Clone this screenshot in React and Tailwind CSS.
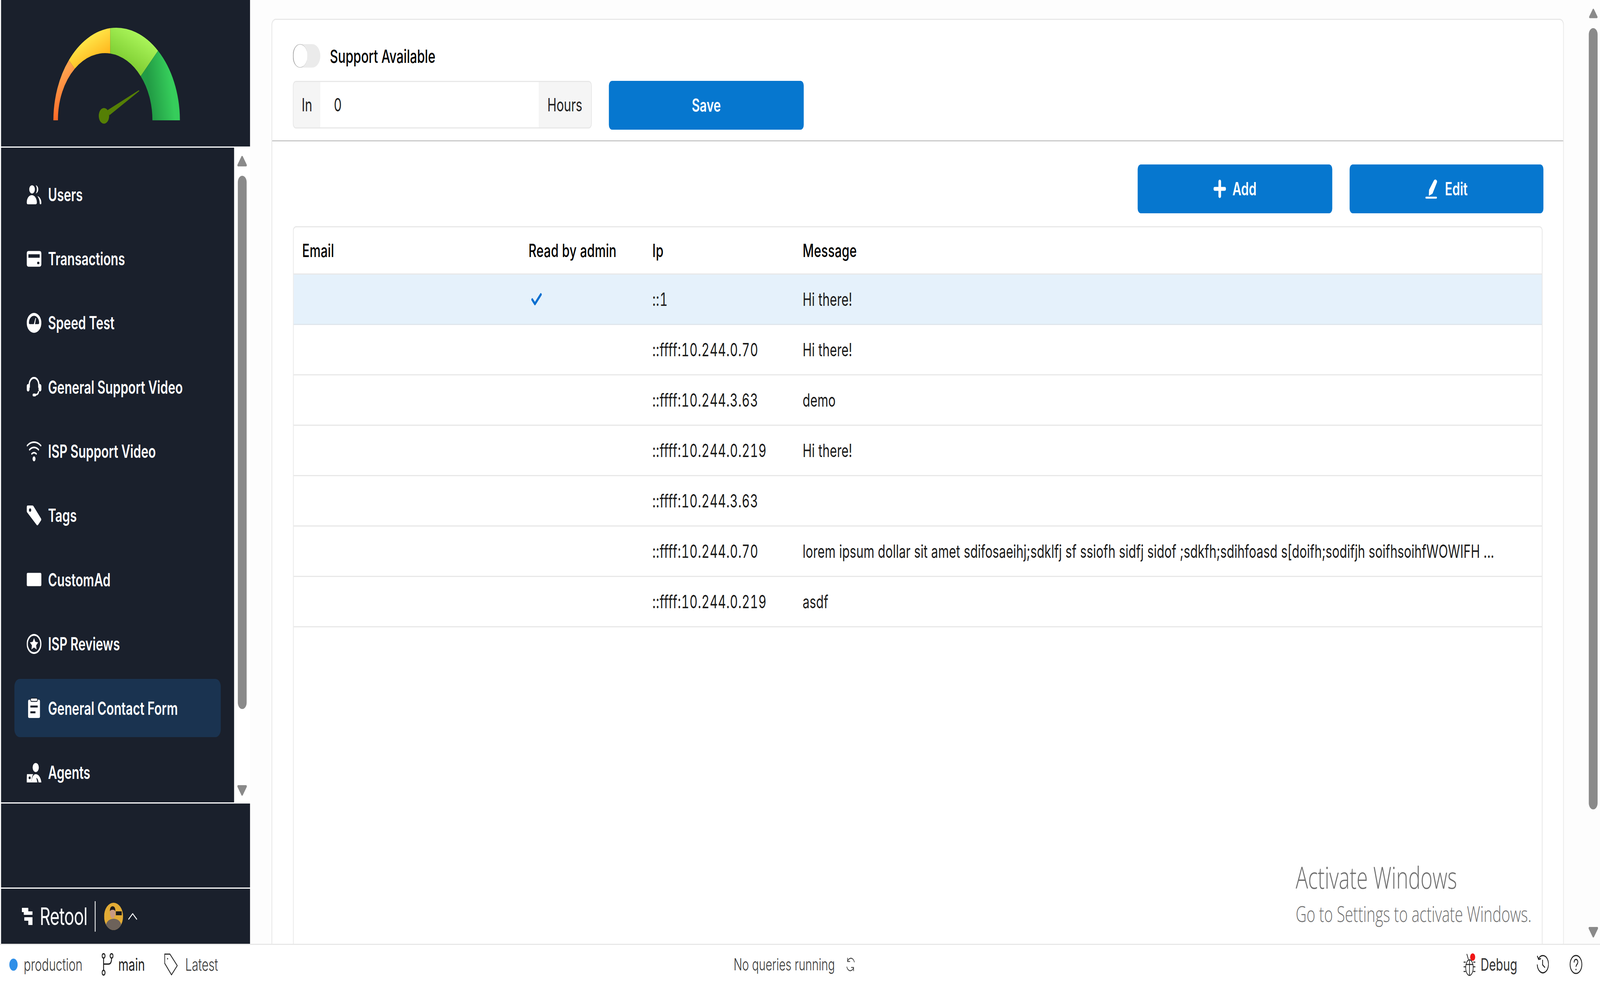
const font = { fontFamily: 'Inter, "Noto Sans", sans-serif' }

// sidebar icons, all on a 26x24 box so they line up
const UsersIcon = () => (
  <svg viewBox="0 0 26 24" className="w-[55px] h-[51px]" fill="white">
    <circle cx="9.500" cy="6" r="5" />
    <path d="M0 22c0-5 4-9 9-9s9 4 9 9c0 1-.8 2-2 2H2c-1.200 0-2-1-2-2z" />
    <path d="M16 1c3 .5 4.500 2.500 4.500 5s-2 4.500-4.500 5c1.500-1.500 2-3 2-5s-.5-3.500-2-5z" />
    <path d="M19 14c4 1 7 4 7 8.500 0 1-.6 1.500-1.400 1.500-1 0-1.600-.5-1.600-1.500 0-3-1.500-6-4-8.500z" />
  </svg>
)
const CardIcon = () => (
  <svg viewBox="0 0 26 24" className="w-[55px] h-[51px]">
    <rect x="0" y="3" width="26" height="19" rx="3" fill="white" />
    <rect x="3" y="7" width="20" height="4.200" fill="#1a202c" />
    <rect x="18.500" y="16" width="4" height="3" rx="1.500" fill="#1a202c" />
  </svg>
)
const SpeedIcon = () => (
  <svg viewBox="0 0 26 24" className="w-[55px] h-[51px]">
    <ellipse cx="13" cy="12" rx="13" ry="12" fill="white" />
    <path d="M4 12a9 8.500 0 0 1 18 0c0 1-.5 1.500-1.500 1.500H5.500C4.500 13.500 4 13 4 12z" fill="#1a202c" />
    <path d="M12.500 14l3-8 1 .5-2 8z" fill="white" />
  </svg>
)
const HeadsetIcon = () => (
  <svg viewBox="0 0 26 24" className="w-[55px] h-[51px]" fill="none" stroke="white">
    <path d="M4.500 13V9.500a8.500 8.500 0 0 1 17 0V13" strokeWidth="2.400" />
    <rect x="0.500" y="9" width="4" height="8" rx="2" fill="white" strokeWidth="1" />
    <rect x="21.500" y="9" width="4" height="8" rx="2" fill="white" strokeWidth="1" />
    <path d="M21 17c0 3-2 4.500-6 4.500" strokeWidth="2" />
    <rect x="10.500" y="20" width="6" height="3.500" rx="1.700" fill="white" strokeWidth="0" />
  </svg>
)
const WifiIcon = () => (
  <svg viewBox="0 0 26 24" className="w-[55px] h-[51px]" fill="none" stroke="white" strokeWidth="2" strokeLinecap="round">
    <path d="M1 5c7-5.500 17-5.500 24 0" />
    <path d="M5 10c5-3.700 11-3.700 16 0" />
    <path d="M9 15c2.500-1.700 5.500-1.700 8 0" />
    <ellipse cx="13" cy="21" rx="2.600" ry="3" fill="white" stroke="none" />
  </svg>
)
const TagIcon = () => (
  <svg viewBox="0 0 26 24" className="w-[55px] h-[55px]">
    <path d="M2 0h8c1 0 1.600.4 2.200 1l13 14.500c.8.900.8 2 0 2.800l-5 5c-.8.800-1.900.8-2.700 0L1 8.500C.4 8 0 7.200 0 6.300V2c0-1.200.8-2 2-2z" fill="white" />
    <circle cx="6" cy="5.500" r="2" fill="#1a202c" />
  </svg>
)
const AdIcon = () => (
  <svg viewBox="0 0 26 24" className="w-[55px] h-[51px]">
    <rect x="0" y="4" width="26" height="16" rx="2" fill="white" />
  </svg>
)
const StarIcon = () => (
  <svg viewBox="0 0 26 24" className="w-[55px] h-[51px]">
    <ellipse cx="13" cy="12" rx="12" ry="11" fill="none" stroke="white" strokeWidth="2.200" />
    <path d="M13 4.800l2.300 4.600 5 .7-3.600 3.500.9 5-4.600-2.400-4.600 2.400.9-5-3.600-3.500 5-.7z" fill="white" />
  </svg>
)
const ClipboardIcon = () => (
  <svg viewBox="0 0 26 24" className="w-[55px] h-[55px]">
    <rect x="2.500" y="2" width="21" height="22" rx="2" fill="white" />
    <rect x="7" y="0" width="12" height="4" rx="1.500" fill="white" stroke="#1a202c" strokeWidth="1" />
    <rect x="6.500" y="9" width="13" height="2.400" fill="#1a202c" />
    <rect x="6.500" y="16" width="9" height="2.400" fill="#1a202c" />
  </svg>
)
const AgentIcon = () => (
  <svg viewBox="0 0 26 24" className="w-[55px] h-[51px]" fill="white">
    <circle cx="16" cy="6" r="5.500" />
    <path d="M8 24c.6-4 3-10 8-10 5 0 9 4 10 10h-5c-.6-3-2-5-4-5.500L19 24z" />
    <path d="M0.500 14h11c-2 2.500-3 6-3.500 10H0c-.2-3 0-7 .5-10z" />
    <rect x="3.500" y="17" width="3.500" height="3" rx="1" fill="#1a202c" />
  </svg>
)

const menu = [
  { label: 'Users', icon: <UsersIcon /> },
  { label: 'Transactions', icon: <CardIcon /> },
  { label: 'Speed Test', icon: <SpeedIcon /> },
  { label: 'General Support Video', icon: <HeadsetIcon /> },
  { label: 'ISP Support Video', icon: <WifiIcon /> },
  { label: 'Tags', icon: <TagIcon /> },
  { label: 'CustomAd', icon: <AdIcon /> },
  { label: 'ISP Reviews', icon: <StarIcon /> },
  { label: 'General Contact Form', icon: <ClipboardIcon />, active: true },
  { label: 'Agents', icon: <AgentIcon /> },
]

const rows = [
  { read: true, ip: '::1', message: 'Hi there!', selected: true },
  { ip: '::ffff:10.244.0.70', message: 'Hi there!' },
  { ip: '::ffff:10.244.3.63', message: 'demo' },
  { ip: '::ffff:10.244.0.219', message: 'Hi there!' },
  { ip: '::ffff:10.244.3.63', message: '' },
  {
    ip: '::ffff:10.244.0.70',
    message: 'lorem ipsum dollar sit amet sdifosaeihj;sdklfj sf ssiofh sidfj sidof ;sdkfh;sdihfoasd s[doifh;sodifjh soifhsoihfWOWIFH ...',
  },
  { ip: '::ffff:10.244.0.219', message: 'asdf' },
]

const Gauge = () => (
  <svg viewBox="198 68 480 250" className="w-[480px] h-[250px]">
    <defs>
      <linearGradient id="orange" gradientUnits="userSpaceOnUse" x1="270" y1="300" x2="210" y2="200">
        <stop offset="0" stopColor="#ff5a1c" />
        <stop offset="1" stopColor="#ffa24e" />
      </linearGradient>
      <linearGradient id="yellow" gradientUnits="userSpaceOnUse" x1="370" y1="150" x2="340" y2="85">
        <stop offset="0" stopColor="#ffb81f" />
        <stop offset="1" stopColor="#ffea4c" />
      </linearGradient>
      <linearGradient id="lime" gradientUnits="userSpaceOnUse" x1="470" y1="170" x2="510" y2="85">
        <stop offset="0" stopColor="#7ccb30" />
        <stop offset="1" stopColor="#a8f358" />
      </linearGradient>
      <linearGradient id="green" gradientUnits="userSpaceOnUse" x1="560" y1="230" x2="640" y2="215">
        <stop offset="0" stopColor="#229c45" />
        <stop offset="1" stopColor="#36cd5b" />
      </linearGradient>
    </defs>
    <path d="M200 308A237 237 0 0 1 258 154L280 176A177 171 0 0 0 217 308Z" fill="url(#orange)" />
    <path d="M258 154A237 237 0 0 1 413 72V137A177 171 0 0 0 280 176Z" fill="url(#yellow)" />
    <path d="M413 72A237 237 0 0 1 592 130L527 195A177 171 0 0 0 413 137Z" fill="url(#lime)" />
    <path d="M592 130A237 237 0 0 1 674 308H571A177 171 0 0 0 527 195Z" fill="url(#green)" />
    <path d="M403 282L520 231L522 233L410 295Z" fill="#557f05" />
    <ellipse cx="389.500" cy="296.500" rx="19.500" ry="20" fill="#557f05" />
  </svg>
)

const RetoolMark = () => (
  <svg viewBox="0 0 40 44" className="w-[40px] h-[44px]" fill="white">
    <rect x="0" y="0" width="24" height="11" rx="1" />
    <rect x="7" y="9" width="33" height="9" rx="1" />
    <rect x="9" y="24" width="31" height="9" rx="1" />
    <rect x="24" y="31" width="16" height="13" rx="1" />
  </svg>
)

const Avatar = () => (
  <svg viewBox="0 0 71 70" className="w-[71px] h-[70px] rounded-full">
    <rect width="71" height="70" fill="#e2ab35" />
    <rect x="44" y="22" width="22" height="10" fill="#1c1c1c" />
    <path d="M4 70c0-20 12-28 31-29 20 0 32 9 32 29z" fill="#6d625a" />
    <ellipse cx="32" cy="26" rx="10" ry="14" fill="#c99a82" />
    <path d="M22 22c-1-9 4-13 10-13s11 4 10 13c-2-3-4-4-10-4s-8 1-10 4z" fill="#1e1a1a" />
  </svg>
)

const ArrowUp = ({ className }) => (
  <svg viewBox="0 0 38 30" className={className} fill="#8a8a8a">
    <path d="M19 2c1.500 0 2.500 1 3.500 2.800L36 24c1.500 2.500.5 5-2.500 5h-29C1.500 29 .5 26.500 2 24L15.500 4.800C16.500 3 17.500 2 19 2z" />
  </svg>
)

const ArrowDown = ({ className }) => (
  <svg viewBox="0 0 38 30" className={className} fill="#8a8a8a">
    <path d="M19 28c-1.500 0-2.500-1-3.500-2.800L2 6C.5 3.500 1.500 1 4.500 1h29c3 0 4 2.500 2.500 5L22.500 25.200C21.500 27 20.500 28 19 28z" />
  </svg>
)

const SidebarItem = ({ item }) => (
  <div
    className={`mx-[50px] h-[149px] shrink-0 rounded-[20px] pl-[46px] flex items-center gap-[25px] ${
      item.active ? 'bg-[#1a3350]' : ''
    }`}
  >
    <span className="w-[55px] flex justify-center shrink-0">{item.icon}</span>
    <span className="text-[46px] font-semibold text-white leading-none whitespace-nowrap">{item.label}</span>
  </div>
)

const Sidebar = () => (
  <div className="ml-[4px] w-[933px] shrink-0 flex flex-col bg-white">
    <div className="h-[375px] bg-[#1a202c] pl-[194px] pt-[68px] shrink-0">
      <Gauge />
    </div>
    <div className="h-[3px] bg-white shrink-0" />
    <div className="h-[1676px] flex shrink-0">
      <div className="w-[873px] bg-[#1a202c] pt-[45px] flex flex-col gap-[15.4px] overflow-hidden">
        {menu.map((item) => (
          <SidebarItem key={item.label} item={item} />
        ))}
      </div>
      <div className="flex-1 flex flex-col items-center pt-[19px]">
        <ArrowUp className="w-[38px] h-[30px]" />
        <div className="w-[33px] h-[1365px] mt-[23px] rounded-full bg-[#8a8a8a]" />
        <ArrowDown className="w-[38px] h-[30px] mt-[194px]" />
      </div>
    </div>
    <div className="h-[3px] bg-white shrink-0" />
    <div className="h-[215px] bg-[#1a202c] shrink-0" />
    <div className="h-[3px] bg-white shrink-0" />
    <div className="flex-1 bg-[#1a202c] pl-[78px] flex items-center">
      <RetoolMark />
      <span className="ml-[27px] text-[62px] text-white leading-none tracking-[-1px]">Retool</span>
      <span className="ml-[28px] w-[3px] h-[78px] bg-white" />
      <span className="ml-[32px]">
        <Avatar />
      </span>
      <svg viewBox="0 0 34 18" className="ml-[19px] w-[34px] h-[18px]" fill="none" stroke="white" strokeWidth="3" strokeLinecap="round" strokeLinejoin="round">
        <path d="M2 16L17 2l15 14" />
      </svg>
    </div>
  </div>
)

const PrimaryButton = ({ children, className }) => (
  <button className={`h-[125px] rounded-[12px] bg-[#0677cf] text-white text-[46px] font-semibold flex items-center justify-center gap-[24px] ${className}`}>
    {children}
  </button>
)

const SupportPanel = () => (
  <div className="h-[311px] shrink-0 border-b-[3px] border-[#c9c9c9] pl-[77px] pt-[62px]">
    <div className="flex items-center gap-[36px] h-[60px]">
      <div className="w-[103px] h-[60px] rounded-full bg-[#ebebeb]">
        <div className="w-[54px] h-[60px] rounded-full bg-white border-l-[3px] border-y border-[#a8a8a8]" />
      </div>
      <span className="text-[47px] font-medium text-black leading-none">Support Available</span>
    </div>
    <div className="flex mt-[34px] gap-[64px]">
      <div className="w-[1120px] h-[122px] rounded-[12px] border-[3px] border-[#e8e8e8] flex overflow-hidden text-[46px] text-[#222]">
        <span className="w-[100px] bg-[#f5f5f5] flex items-center justify-center">In</span>
        <span className="flex-1 pl-[51px] flex items-center">0</span>
        <span className="w-[196px] bg-[#f5f5f5] flex items-center justify-center">Hours</span>
      </div>
      <PrimaryButton className="w-[730px]">Save</PrimaryButton>
    </div>
  </div>
)

const MessagesTable = () => (
  <div className="mx-[77px] mt-[33px] flex-1 border-t-[3px] border-x-[3px] border-[#e8e8e8] rounded-t-[12px] overflow-hidden">
    <div className="grid grid-cols-[846px_464px_563px_1fr] h-[121px] items-center text-[46px] font-medium text-black tracking-[0.4px] border-b-[3px] border-[#e8e8e8]">
      <span className="pl-[32px]">Email</span>
      <span className="pl-[34px]">Read by admin</span>
      <span className="pl-[34px]">Ip</span>
      <span className="pl-[34px]">Message</span>
    </div>
    {rows.map((row, i) => (
      <div
        key={i}
        className={`grid grid-cols-[846px_464px_563px_1fr] h-[129px] items-center text-[46px] text-[#1a1a1a] border-b-[3px] ${
          row.selected ? 'bg-[#e5f1fb] border-[#dfe6ec]' : 'border-[#e8e8e8]'
        }`}
      >
        <span />
        <span className="pl-[44px] flex">
          {row.read && (
            <svg viewBox="0 0 40 32" className="w-[40px] h-[32px]" fill="none" stroke="#0a6fd0" strokeWidth="7" strokeLinecap="round" strokeLinejoin="round">
              <path d="M4 17l10 11L36 4" />
            </svg>
          )}
        </span>
        <span className="pl-[34px] whitespace-nowrap tabular-nums tracking-[1.2px]">{row.ip}</span>
        <span className="pl-[34px] whitespace-nowrap overflow-hidden tracking-[0.2px]">{row.message}</span>
      </div>
    ))}
  </div>
)

const MainPanel = () => (
  <div className="relative flex-1 flex bg-[#fdfdfd] min-w-0">
    <div className="flex-1 ml-[80px] mt-[48px] min-w-0 flex flex-col bg-white border-t-[3px] border-x-[3px] border-[#e8e8e8] rounded-t-[16px]">
      <SupportPanel />
      <div className="flex justify-end gap-[65px] pr-[74px] pt-[59px] shrink-0">
        <PrimaryButton className="w-[729px]">
          <svg viewBox="0 0 48 48" className="w-[47px] h-[47px]" fill="white">
            <path d="M19 5c0-3 2-5 5-5s5 2 5 5v14h14c3 0 5 2 5 5s-2 5-5 5H29v14c0 3-2 5-5 5s-5-2-5-5V29H5c-3 0-5-2-5-5s2-5 5-5h14z" />
          </svg>
          Add
        </PrimaryButton>
        <PrimaryButton className="w-[726px]">
          <svg viewBox="0 0 50 50" className="w-[49px] h-[50px]" fill="white">
            <path d="M37 0c2-.5 6 1.500 7 3.500.8 1.500.5 3-.2 4.500L27 37l-12 5c-1.500.5-2.500-.5-2-2l1-13L32 3c1.500-1.500 3-2.600 5-3z" />
            <rect x="0" y="45" width="44" height="5" rx="2.500" />
          </svg>
          Edit
        </PrimaryButton>
      </div>
      <MessagesTable />
    </div>
    <div className="w-[135px] shrink-0 pl-[84px] pt-[19px] flex flex-col items-center">
      <ArrowUp className="w-[34px] h-[30px]" />
      <div className="w-[33px] h-[2000px] mt-[23px] rounded-full bg-[#8a8a8a] shrink-0" />
      <ArrowDown className="w-[38px] h-[30px] mt-[300px]" />
    </div>
    <div className="absolute left-[3917px] top-[2196px] font-['Open_Sans'] font-light text-[#6f6f6f]">
      <p className="text-[77px] leading-[100px] whitespace-nowrap">Activate Windows</p>
      <p className="text-[56px] leading-[72px] mt-[6px] whitespace-nowrap">Go to Settings to activate Windows.</p>
    </div>
  </div>
)

const StatusBar = () => (
  <div className="h-[103px] shrink-0 bg-white border-t-[3px] border-[#e8e8e8] flex items-center text-[44px] text-[#3a3a3a] relative">
    <span className="ml-[35px] w-[31px] h-[31px] rounded-full bg-[#2f8fe8]" />
    <span className="ml-[23px] font-light">production</span>
    <svg viewBox="0 0 44 58" className="ml-[72px] w-[44px] h-[58px]" fill="none" stroke="#222" strokeWidth="3.500">
      <ellipse cx="7" cy="7" rx="5.500" ry="5.500" />
      <ellipse cx="7" cy="50" rx="5.500" ry="6" />
      <ellipse cx="37" cy="7" rx="5.500" ry="5.500" />
      <path d="M7 13v31M37 13c0 10-4 15-12 15H7" />
    </svg>
    <span className="ml-[18px] text-[#222]">main</span>
    <svg viewBox="0 0 52 58" className="ml-[72px] w-[51px] h-[58px]" fill="none" stroke="#333" strokeWidth="3" strokeLinejoin="round">
      <path d="M2 2h20l28 30-22 24L2 26z" />
      <circle cx="13" cy="14" r="2" fill="#333" stroke="none" />
    </svg>
    <span className="ml-[28px] font-light">Latest</span>

    <span className="ml-[1931px] text-[42.500px] font-light whitespace-nowrap">No queries running</span>
    <svg viewBox="0 0 34 40" className="ml-[42px] w-[33px] h-[38px]" fill="none" stroke="#444" strokeWidth="2.500">
      <path d="M5 2v10h10M5 12C8 4 18 1 25 5c4 2 6 6 7 9M29 38V28H19M29 28c-3 8-13 11-20 7-4-2-6-6-7-9" />
    </svg>

    <svg viewBox="0 0 50 60" className="ml-auto w-[50px] h-[60px]" fill="none" stroke="#222" strokeWidth="2.500">
      <ellipse cx="24" cy="38" rx="14" ry="20" />
      <path d="M10 30h28M2 24h8M2 36h8M2 48h8M38 24h8M38 36h8M38 48h8M24 18v40M14 3l6 14" />
      <circle cx="36" cy="11" r="9.500" fill="#f01616" stroke="none" />
    </svg>
    <span className="ml-[16px] text-[#333]">Debug</span>
    <svg viewBox="0 0 46 50" className="ml-[72px] w-[46px] h-[50px]" fill="none" stroke="#222" strokeWidth="3">
      <path d="M8 10a21 22 0 1 1-5 15M3 3l5 9 9-2M23 13v13l9 7" />
    </svg>
    <svg viewBox="0 0 48 50" className="ml-[78px] mr-[66px] w-[48px] h-[50px]" fill="none" stroke="#222" strokeWidth="3">
      <ellipse cx="24" cy="25" rx="22" ry="23" />
      <path d="M17 20c0-5 3-8 7-8s7 3 7 7c0 6-7 6-7 12" />
      <circle cx="24" cy="38" r="2" fill="#222" stroke="none" />
    </svg>
  </div>
)

export default function App() {
  // the window can come out narrower than the 5994px this page is laid out for
  const fit = Math.min(1, window.innerWidth / 5994)

  return (
    <div className="w-screen h-screen overflow-hidden">
      <div
        className="w-[5994px] h-[2519px] flex flex-col overflow-hidden bg-white origin-top-left"
        style={{ ...font, transform: `scaleX(${fit})` }}
      >
        <div className="flex-1 flex min-h-0">
          <Sidebar />
          <MainPanel />
        </div>
        <StatusBar />
      </div>
    </div>
  )
}
